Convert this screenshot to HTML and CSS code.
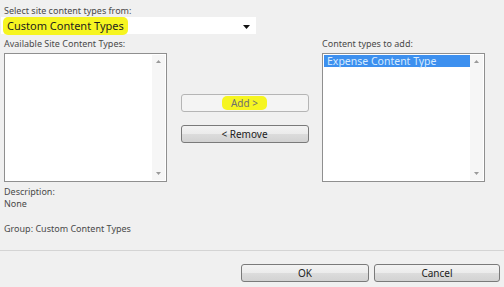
FILE: index.html
```html
<!DOCTYPE html>
<html>
<head>
<meta charset="utf-8">
<link rel="stylesheet" href="styles.css">
</head>
<body>
<div class="page">
  <div class="label top-label">Select site content types from:</div>
  <div class="select">
    <span class="hl select-text">Custom Content Types</span>
    <svg class="caret" width="7" height="4" viewBox="0 0 7 4"><path d="M0 0H7L3.5 4Z" fill="#111"/></svg>
  </div>
  <div class="lists">
    <div class="col">
      <div class="label">Available Site Content Types:</div>
      <div class="listbox">
        <div class="items"></div>
        <div class="scroll">
          <svg width="5" height="3" viewBox="0 0 5 3"><path d="M0 3H5L2.5 0Z" fill="#9a9a9a"/></svg>
          <svg width="5" height="3" viewBox="0 0 5 3"><path d="M0 0H5L2.5 3Z" fill="#9a9a9a"/></svg>
        </div>
      </div>
    </div>
    <div class="middle">
      <button class="btn disabled"><span class="hl add-text">Add &gt;</span></button>
      <button class="btn">&lt; Remove</button>
    </div>
    <div class="col">
      <div class="label">Content types to add:</div>
      <div class="listbox">
        <div class="items"><div class="item selected">Expense Content Type</div></div>
        <div class="scroll">
          <svg width="5" height="3" viewBox="0 0 5 3"><path d="M0 3H5L2.5 0Z" fill="#9a9a9a"/></svg>
          <svg width="5" height="3" viewBox="0 0 5 3"><path d="M0 0H5L2.5 3Z" fill="#9a9a9a"/></svg>
        </div>
      </div>
    </div>
  </div>
  <div class="info">
    <div class="label">Description:</div>
    <div class="label">None</div>
    <div class="label group">Group: Custom Content Types</div>
  </div>
</div>
<div class="footer">
  <button class="btn ok">OK</button>
  <button class="btn cancel">Cancel</button>
</div>
</body>
</html>
```
FILE: styles.css
```css
html, body {
  margin: 0;
  padding: 0;
  background: #f0f0f0;
  font-family: "Noto Sans", "DejaVu Sans", sans-serif;
  color: #444;
}
body {
  width: 504px;
  height: 287px;
  overflow: hidden;
}
.page {
  padding: 5px 0 0 4px;
  height: 251px;
  box-sizing: border-box;
  border-bottom: 1px solid #d4d4d4;
}
.label {
  font-size: 9px;
  line-height: 12px;
  color: #4a4a4a;
}
.select {
  margin: 0 0 0 -3px;
  width: 255px;
  height: 17px;
  background: #fff;
  display: flex;
  align-items: center;
  justify-content: space-between;
  box-sizing: border-box;
  padding: 0 6px 0 2px;
}
.hl {
  background: #f6f521;
  border-radius: 5px;
}
.select-text {
  font-size: 11px;
  line-height: 16px;
  color: #1e1e1e;
  padding: 1px 4px 1px 4px;
}
.caret { margin-top: 2px; }
.lists {
  display: flex;
  margin-top: 4px;
}
.col {
  width: 163px;
  display: flex;
  flex-direction: column;
}
.col .label { height: 13px; }
.listbox {
  height: 129px;
  background: #fff;
  border: 1px solid #8f8f8f;
  box-sizing: border-box;
  display: flex;
  margin-top: 2px;
  padding: 1px;
}
.items { flex: 1; }
.scroll {
  width: 13px;
  background: #f6f6f6;
  display: flex;
  flex-direction: column;
  justify-content: space-between;
  align-items: center;
  padding: 5px 0 5px;
  box-sizing: border-box;
}
.scroll svg { display: block; }
.item {
  font-size: 10.5px;
  line-height: 12px;
  padding-left: 3px;
}
.selected {
  background: #3d90ef;
  color: #d6ebff;
}
.middle {
  width: 155px;
  display: flex;
  flex-direction: column;
  align-items: center;
  padding-top: 56px;
  gap: 13px;
}
.btn {
  width: 128px;
  height: 18px;
  font-family: "Noto Sans", "DejaVu Sans", sans-serif;
  font-size: 10px;
  color: #222;
  border: 1px solid #7a7a7a;
  border-radius: 3px;
  background: linear-gradient(#f3f3f3 0%, #ebebeb 50%, #dcdcdc 51%, #d2d2d2 100%);
  padding: 0;
  margin: 0;
  display: flex;
  align-items: center;
  justify-content: center;
}
.btn.disabled {
  background: #f4f4f4;
  border-color: #b5b5b5;
  color: #6f6f6f;
}
.add-text {
  padding: 1px 9px;
  line-height: 12px;
}
.info {
  margin-top: 4px;
}
.group { margin-top: 13px; }
.footer {
  display: flex;
  justify-content: flex-end;
  gap: 5px;
  padding: 13px 4px 0 0;
}
.ok { width: 128px; }
.cancel { width: 126px; }
```
